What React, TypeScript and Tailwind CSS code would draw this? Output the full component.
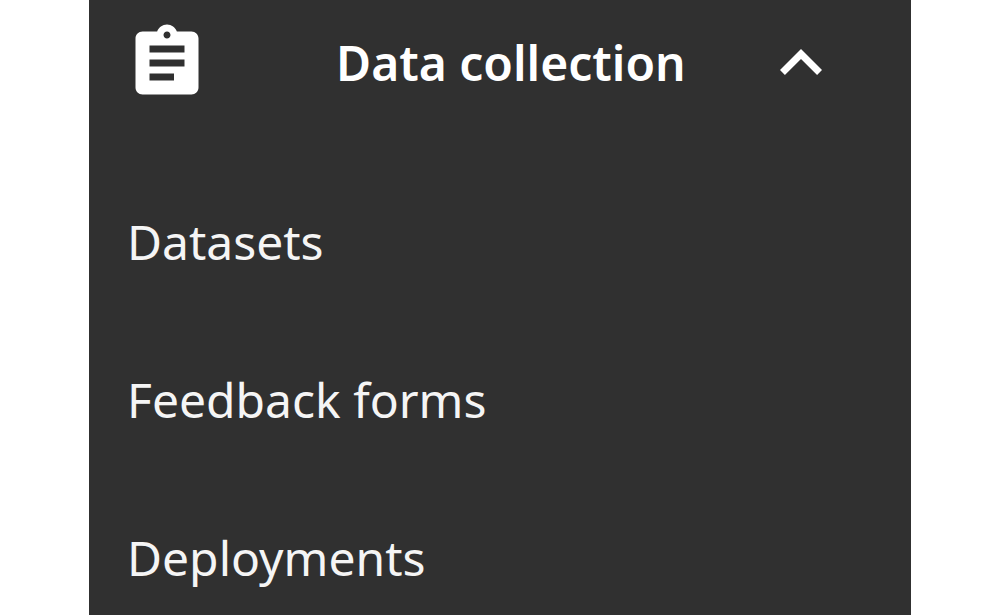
import { useState } from 'react';
import { MdAssignment, MdKeyboardArrowUp, MdKeyboardArrowDown } from 'react-icons/md';

const LINKS = [
  { label: 'Datasets', href: '#datasets' },
  { label: 'Feedback forms', href: '#feedback-forms' },
  { label: 'Deployments', href: '#deployments' },
];

export default function App() {
  const [open, setOpen] = useState(true);

  return (
    <div className="flex h-screen justify-center overflow-hidden bg-white font-['Noto_Sans',sans-serif] text-[48px] leading-[64px] text-[#f5f5f5]">
      <nav className="h-fit min-h-screen w-full max-w-[822px] bg-[#303030]">
        <button
          type="button"
          aria-expanded={open}
          aria-controls="data-collection"
          onClick={() => setOpen(!open)}
          className="flex h-[126px] w-full items-center pl-9 pr-[68px] font-semibold text-white"
        >
          <MdAssignment size={84} className="shrink-0" />
          <span className="flex-1 pl-[127px] text-left">Data collection</span>
          {open ? (
            <MdKeyboardArrowUp size={84} className="shrink-0" />
          ) : (
            <MdKeyboardArrowDown size={84} className="shrink-0" />
          )}
        </button>

        {open && (
          <ul id="data-collection" className="flex flex-col pt-[37px]">
            {LINKS.map(({ label, href }) => (
              <li key={label}>
                <a href={href} className="flex px-[38px] py-[47px]">{label}</a>
              </li>
            ))}
          </ul>
        )}
      </nav>
    </div>
  );
}
